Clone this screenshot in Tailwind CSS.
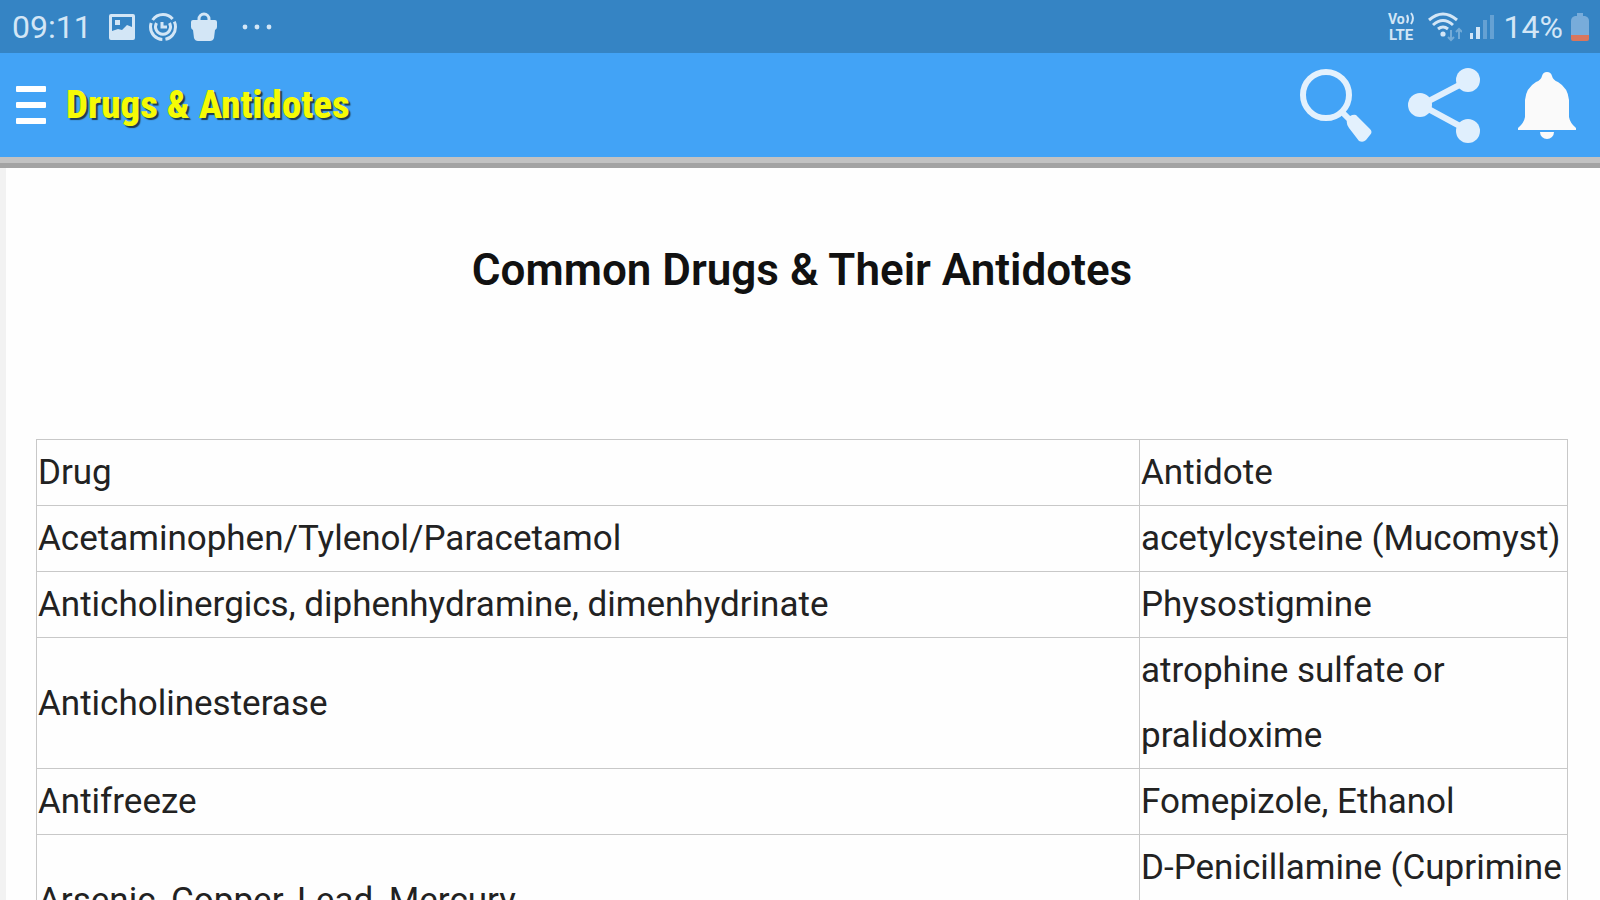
<!DOCTYPE html>
<html lang="en">
<head>
  <meta charset="UTF-8" />
  <meta name="viewport" content="width=device-width, initial-scale=1.0"/>
  <title>Drugs &amp; Antidotes</title>
  <script src="https://cdn.jsdelivr.net/npm/@tailwindcss/browser@4"></script>
</head>
<body class="h-screen flex flex-col overflow-hidden bg-[#f2f2f2] font-['Roboto',sans-serif]">

  <!-- Status bar -->
  <div class="shrink-0 h-[53px] bg-[#3584c4] flex items-center justify-between pl-3 pr-[11px] text-[#d3e6f6]">
    <div class="flex items-center">
      <span class="text-[32px] leading-8 mr-4">09:11</span>
      <svg class="w-7 h-7 mr-3" viewBox="0 0 28 28" fill="currentColor">
        <path fill-rule="evenodd" d="M3 1h22a2 2 0 0 1 2 2v22a2 2 0 0 1-2 2H3a2 2 0 0 1-2-2V3a2 2 0 0 1 2-2zm1 3v14l6-2 4 1 5-5 5 2V4zM7 7h5v5H7z"/>
      </svg>
      <svg class="w-[30px] h-[30px] mr-3" viewBox="0 0 30 30" fill="none" stroke="currentColor" stroke-width="3">
        <circle cx="15" cy="15" r="12.5" stroke-dasharray="23 3.2" stroke-dashoffset="6"/>
        <path d="M8.500 11a7.500 7.500 0 1 0 13 0M14 10v5h5"/>
      </svg>
      <svg class="w-7 h-[30px] mr-6" viewBox="0 0 28 30">
        <path fill="currentColor" d="M3 8h22q2 0 2 2v5q0 2-2 3l-1 8q-1 3-4 3H8q-3 0-4-3l-1-8q-2-1-2-3v-5q0-2 2-2z"/>
        <path fill="none" stroke="currentColor" stroke-width="3" d="M9 9V7a5 5 0 0 1 10 0v2"/>
      </svg>
      <svg class="w-[30px] h-1.5" viewBox="0 0 30 6" fill="currentColor">
        <circle cx="3" cy="3" r="2.4"/><circle cx="15" cy="3" r="2.4"/><circle cx="27" cy="3" r="2.4"/>
      </svg>
    </div>
    <div class="flex items-center">
      <svg class="w-7 h-8 mr-3 overflow-visible" viewBox="0 0 28 32" fill="currentColor">
        <text x="0" y="13" font-size="14" font-weight="700">Vo</text>
        <path fill="none" stroke="currentColor" stroke-width="2" d="M19 4q2 4 0 8M23 2q4 5 0 11"/>
        <text x="1" y="29" font-size="15" font-weight="700">LTE</text>
      </svg>
      <svg class="w-[34px] h-[30px] mr-1.5" viewBox="0 0 34 30" fill="none" stroke="currentColor" stroke-width="3">
        <path d="M1 8q14-12 28 0M5 13q10-9 20 0M10 17q5-4 10 0"/>
        <circle cx="15" cy="22" r="2.6" fill="currentColor" stroke="none"/>
        <path stroke-width="2" opacity=".4" d="M23 18v10M20 25l3 3 3-3M31 27V17M28 20l3-3 3 3"/>
      </svg>
      <svg class="w-7 h-[30px] mr-2" viewBox="0 0 28 30" fill="currentColor">
        <path d="M2 21h3v6H2zM8 15h4v12H8z"/>
        <path opacity=".3" d="M15 8h4v19h-4zM22 3h4v24h-4z"/>
      </svg>
      <span class="text-[32px] leading-8 mr-2">14%</span>
      <svg class="w-[18px] h-[30px]" viewBox="0 0 18 30">
        <path fill="#78acda" d="M6 1h6v3h2q4 1 4 5v15H0V9q0-4 4-5h2z"/>
        <path fill="#d9765c" d="M0 23h18v4q0 2-2 2H2q-2 0-2-2z"/>
      </svg>
    </div>
  </div>

  <!-- App bar -->
  <header class="shrink-0 h-[104px] bg-[#42a3f6] flex items-center justify-between pl-4 pr-6">
    <div class="flex items-center gap-5">
      <button type="button" aria-label="Menu">
        <svg class="block w-[30px] h-10" viewBox="0 0 30 40" fill="#fff">
          <rect y="1" width="30" height="6" rx="1"/><rect y="17" width="30" height="6" rx="1"/><rect y="33" width="30" height="6" rx="1"/>
        </svg>
      </button>
      <h1 class="font-['Roboto_Condensed','Liberation_Sans_Narrow','Roboto',sans-serif] font-extrabold text-[39px] leading-[48px] text-[#f6fb05] text-shadow-[2px_2px_1px_#1f3b4d]">Drugs &amp; Antidotes</h1>
    </div>
    <div class="flex items-center gap-9">
      <button type="button" aria-label="Search">
        <svg class="block w-[72px] h-[76px]" viewBox="0 0 72 76">
          <circle cx="26" cy="28" r="23" fill="none" stroke="#e3f1fd" stroke-width="6"/>
          <path d="M42 45l8 8" stroke="#e3f1fd" stroke-width="6"/>
          <path d="M47 53q3-6 9-5l14 14q3 3 0 6l-4 5q-3 3-7 1L49 61q-3-4-2-8z" fill="#e3f1fd"/>
        </svg>
      </button>
      <button type="button" aria-label="Share">
        <svg class="block w-[72px] h-[76px]" viewBox="0 0 72 76" fill="#e0effd">
          <path d="M61 13L13 38l48 26" fill="none" stroke="#e0effd" stroke-width="6"/>
          <circle cx="12" cy="38" r="12"/><circle cx="60" cy="13" r="12"/><circle cx="60" cy="64" r="12"/>
        </svg>
      </button>
      <button type="button" aria-label="Notifications">
        <svg class="block w-[60px] h-[68px]" viewBox="-2 0 60 68" fill="#fafafa">
          <path d="M24 5q1-4 5-4t5 4q1 4 6 6 10 6 11 18v17q1 6 7 11v2H0v-2q6-5 7-11V29q1-12 11-18 5-2 6-6z"/>
          <path d="M22 61h14a7 7 0 0 1-14 0z"/>
        </svg>
      </button>
    </div>
  </header>

  <div class="shrink-0 h-[11px] bg-[#a3a3a3] border-t-6 border-[#c2c2c2]"></div>

  <!-- Page -->
  <main class="grow min-h-0 overflow-hidden ml-1.5 pl-[30px] pr-8 bg-[#fefefe] text-[#222]">
    <h2 class="pt-16 pb-[131px] text-center text-[44px] leading-[76px] font-semibold text-[#111]">Common Drugs &amp; Their Antidotes</h2>
    <table class="w-full table-fixed border-collapse text-left text-[35px] leading-[65px]">
      <colgroup>
        <col>
        <col class="w-[428px]">
      </colgroup>
      <thead>
        <tr>
          <th class="border border-[#c8c8c8] pl-px font-normal">Drug</th>
          <th class="border border-[#c8c8c8] pl-px font-normal">Antidote</th>
        </tr>
      </thead>
      <tbody>
        <tr>
          <td class="border border-[#c8c8c8] pl-px">Acetaminophen/Tylenol/Paracetamol</td>
          <td class="border border-[#c8c8c8] pl-px">acetylcysteine (Mucomyst)</td>
        </tr>
        <tr>
          <td class="border border-[#c8c8c8] pl-px">Anticholinergics, diphenhydramine, dimenhydrinate</td>
          <td class="border border-[#c8c8c8] pl-px">Physostigmine</td>
        </tr>
        <tr>
          <td class="border border-[#c8c8c8] pl-px">Anticholinesterase</td>
          <td class="border border-[#c8c8c8] pl-px">atrophine sulfate or pralidoxime</td>
        </tr>
        <tr>
          <td class="border border-[#c8c8c8] pl-px">Antifreeze</td>
          <td class="border border-[#c8c8c8] pl-px">Fomepizole, Ethanol</td>
        </tr>
        <tr>
          <td class="border border-[#c8c8c8] pl-px">Arsenic, Copper, Lead, Mercury</td>
          <td class="border border-[#c8c8c8] pl-px">D-Penicillamine (Cuprimine<br>&nbsp;</td>
        </tr>
      </tbody>
    </table>
  </main>

</body>
</html>
